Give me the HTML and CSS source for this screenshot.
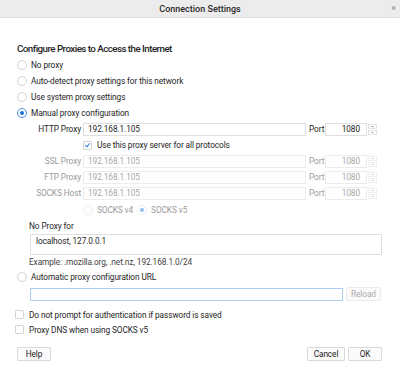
FILE: index.html
```html
<!DOCTYPE html>
<html lang="en">
<head>
    <meta charset="UTF-8">
    <meta name="viewport" content="width=device-width, initial-scale=1.0">
    <title>Connection Settings</title>
    <link rel="stylesheet" href="styles.css">
</head>
<body>
    <div class="dialog">
        <div class="titlebar">
            <span class="title">Connection Settings</span>
            <span class="close">×</span>
        </div>

        <div class="content">
            <h1 class="heading">Configure Proxies to Access the Internet</h1>

            <div class="option"><span class="radio"></span>No proxy</div>
            <div class="option"><span class="radio"></span>Auto-detect proxy settings for this network</div>
            <div class="option"><span class="radio"></span>Use system proxy settings</div>
            <div class="option"><span class="radio checked"></span>Manual proxy configuration</div>

            <div class="proxies">
                <div class="proxy-row">
                    <span class="label">HTTP Proxy</span>
                    <span class="field host">192.168.1.105</span>
                    <span class="port-label">Port</span>
                    <span class="field port">1080</span>
                    <span class="spinner"><i></i><i></i></span>
                </div>
                <div class="proxy-row">
                    <span class="label"></span>
                    <span class="check-line"><span class="checkbox checked"></span>Use this proxy server for all protocols</span>
                </div>
                <div class="proxy-row disabled">
                    <span class="label">SSL Proxy</span>
                    <span class="field host">192.168.1.105</span>
                    <span class="port-label">Port</span>
                    <span class="field port">1080</span>
                    <span class="spinner"><i></i><i></i></span>
                </div>
                <div class="proxy-row disabled">
                    <span class="label">FTP Proxy</span>
                    <span class="field host">192.168.1.105</span>
                    <span class="port-label">Port</span>
                    <span class="field port">1080</span>
                    <span class="spinner"><i></i><i></i></span>
                </div>
                <div class="proxy-row disabled">
                    <span class="label">SOCKS Host</span>
                    <span class="field host">192.168.1.105</span>
                    <span class="port-label">Port</span>
                    <span class="field port">1080</span>
                    <span class="spinner"><i></i><i></i></span>
                </div>
                <div class="proxy-row disabled socks">
                    <span class="label"></span>
                    <span class="socks-opt"><span class="radio"></span>SOCKS v4</span>
                    <span class="socks-opt"><span class="radio checked"></span>SOCKS v5</span>
                </div>
            </div>

            <div class="noproxy">
                <div class="sub-label">No Proxy for</div>
                <div class="textarea">localhost, 127.0.0.1</div>
                <div class="sub-label example">Example: .mozilla.org, .net.nz, 192.168.1.0/24</div>
            </div>

            <div class="option"><span class="radio"></span>Automatic proxy configuration URL</div>
            <div class="url-row">
                <span class="field url"></span>
                <span class="button reload">Reload</span>
            </div>

            <div class="check-option"><span class="checkbox"></span>Do not prompt for authentication if password is saved</div>
            <div class="check-option"><span class="checkbox"></span>Proxy DNS when using SOCKS v5</div>

            <div class="footer">
                <span class="button help">Help</span>
                <span class="spacer"></span>
                <span class="button cancel">Cancel</span>
                <span class="button ok">OK</span>
            </div>
        </div>
    </div>
</body>
</html>
```

FILE: styles.css
```css
body {
    margin: 0;
    font-family: Roboto, "Liberation Sans", sans-serif;
    font-size: 8.3px;
    letter-spacing: -0.1px;
    color: #262626;
    background: #fff;
}

.dialog {
    width: 400px;
    height: 370px;
    overflow: hidden;
}

.titlebar {
    height: 17px;
    background: #ececec;
    border-bottom: 1px solid #dcdcdc;
    display: flex;
    align-items: center;
    justify-content: center;
    position: relative;
}

.title {
    font-size: 9px;
    font-weight: 500;
    letter-spacing: 0;
    color: #2a2a2a;
}

.close {
    position: absolute;
    right: 4px;
    top: 3px;
    font-size: 9px;
    color: #888;
}

.content {
    padding: 0 17px;
}

.heading {
    margin: 22px 0 0;
    height: 17px;
    font-size: 9.8px;
    font-weight: 500;
    letter-spacing: -0.55px;
    line-height: 17px;
    color: #1f1f1f;
}

.option {
    height: 16px;
    display: flex;
    align-items: center;
}

.radio {
    display: inline-block;
    width: 8px;
    height: 8px;
    border: 1px solid #d4d4d4;
    border-radius: 50%;
    background: #fff;
    margin-right: 4px;
    box-sizing: content-box;
    position: relative;
    flex-shrink: 0;
}

.radio.checked {
    border-color: #4a90e2;
}

.radio.checked::after {
    content: "";
    position: absolute;
    left: 2px;
    top: 2px;
    width: 4px;
    height: 4px;
    border-radius: 50%;
    background: #1a73e8;
}

.proxies {
    margin-left: 13px;
}

.proxy-row {
    height: 16px;
    display: flex;
    align-items: center;
}

.label {
    width: 51px;
    text-align: right;
    margin-right: 2px;
    flex-shrink: 0;
}

.field {
    height: 11px;
    border: 1px solid #dedede;
    background: #fff;
    line-height: 11px;
    padding: 0 4px;
    box-sizing: content-box;
}

.host {
    width: 213px;
}

.port-label {
    width: 16px;
    margin-left: 3px;
}

.port {
    width: 34px;
    text-align: right;
    padding-right: 6px;
    padding-left: 0;
}

.spinner {
    display: flex;
    flex-direction: column;
    gap: 1px;
    margin-left: 1px;
}

.spinner i {
    display: block;
    width: 9px;
    height: 5px;
    border: 1px solid #e2e2e2;
    box-sizing: border-box;
    position: relative;
}

.spinner i::after {
    content: "";
    position: absolute;
    left: 2px;
    top: 1px;
    width: 3px;
    height: 1px;
    background: #bbb;
}

.check-line {
    display: flex;
    align-items: center;
}

.checkbox {
    display: inline-block;
    width: 7px;
    height: 7px;
    border: 1px solid #d4d4d4;
    border-radius: 1px;
    background: #fff;
    margin-right: 5px;
    position: relative;
    flex-shrink: 0;
}

.checkbox.checked::after {
    content: "";
    position: absolute;
    left: 2px;
    top: 0;
    width: 2px;
    height: 4px;
    border: solid #3b82d8;
    border-width: 0 1px 1px 0;
    transform: rotate(40deg);
}

.disabled {
    color: #9a9a9a;
}

.disabled .field {
    border-color: #ececec;
    color: #a8a8a8;
}

.disabled .spinner i {
    border-color: #efefef;
}

.disabled .spinner i::after {
    background: #ddd;
}

.socks {
    height: 18px;
}

.socks-opt {
    display: flex;
    align-items: center;
    margin-right: 4px;
}

.socks .radio {
    border-color: #ececec;
}

.socks .radio.checked::after {
    background: #8ec1ee;
}

.noproxy {
    margin-left: 12px;
}

.sub-label {
    height: 14px;
    line-height: 14px;
}

.textarea {
    height: 17px;
    border: 1px solid #dedede;
    margin-left: 1px;
    margin-top: 1px;
    padding: 1px 5px;
    line-height: 10px;
    width: 340px;
}

.example {
    color: #444;
}

.url-row {
    display: flex;
    align-items: center;
    margin-left: 13px;
    margin-top: 2px;
    height: 14px;
}

.url {
    width: 305px;
    border-color: #a8ccf4;
    padding: 0 3px;
}

.button {
    display: inline-flex;
    align-items: center;
    justify-content: center;
    height: 12px;
    border: 1px solid #dadada;
    border-radius: 1px;
    background: #fbfbfb;
    color: #222;
    box-sizing: content-box;
}

.reload {
    margin-left: 3px;
    width: 33px;
    color: #aaa;
    border-color: #ececec;
}

.check-option {
    height: 15px;
    display: flex;
    align-items: center;
    margin-left: -2px;
}

.url-row + .check-option {
    margin-top: 6px;
}

.footer {
    display: flex;
    align-items: center;
    margin-top: 10px;
    gap: 3px;
    padding-right: 1px;
}

.help {
    width: 32px;
}

.cancel {
    width: 36px;
}

.ok {
    width: 32px;
}

.spacer {
    flex: 1;
}
```
